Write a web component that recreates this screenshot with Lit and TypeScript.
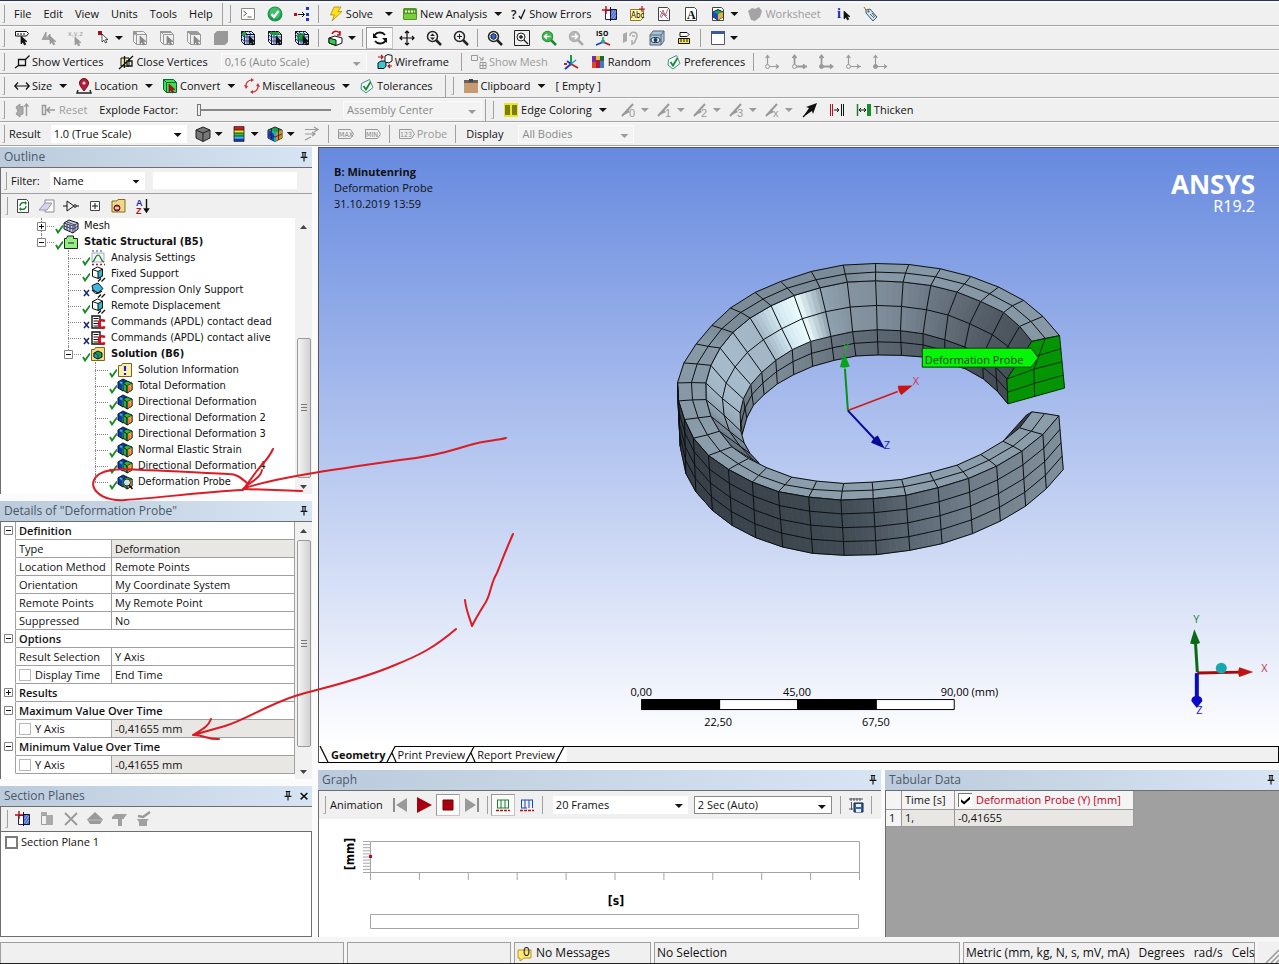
import { LitElement, html, svg, css, nothing } from "lit";
import { customElement } from "lit/decorators.js";

/* ---------- icons: 16 x 16 fragments ---------- */
const cursor = (x: number, y: number, c = "#111", f = c) =>
  svg`<path d="M${x} ${y}v8l2-1.8 1.4 2.8 1.4-.7-1.4-2.7h2.6z" fill=${f} stroke=${c} stroke-width=".7"/>`;
const page = svg`<path d="M2.5 1.5h9l2 2v11h-11z" fill="#fff" stroke="#444"/>`;
const wireCube = (c: string, fill: string) =>
  svg`<path d="M1.500 1.500h10l3 3v10h-10l-3-3z" fill=${fill} stroke=${c}/><path d="M1.500 1.500l3 3h10M4.500 4.500v10" fill="none" stroke=${c}/>`;
const meshCube = svg`${wireCube("#111", "#d4dcf6")}<path d="M1 4l3 3h10M1 8l3 3h10M7 5v10M10 5v10M4 1l3 3M8 1l3 3" fill="none" stroke="#33499c"/>`;
const rainbow = svg`<path d="M1 4l5-3 4 2v8l-4 2-5-3z" fill="#1636b8" stroke="#112"/><path d="M3 4l3 2v6" fill="none" stroke="#13c6d6" stroke-width="2"/><path d="M6 5l4-2 5 2v7l-5 3-4-3z" fill="#22b14c" stroke="#121"/><path d="M10 8l5-3v7l-5 3z" fill="#f0a63c" stroke="#121" stroke-width=".7"/><path d="M6 5l4 3v7" fill="none" stroke="#121"/><path d="M12 9v4" stroke="#e33" stroke-width=".8"/>`;
const mag = (c: string, inner: unknown = nothing) =>
  svg`<circle cx="6.500" cy="6.500" r="5" fill="none" stroke=${c} stroke-width="1.500"/><path d="M10 10l5 5" stroke=${c} stroke-width="2.500"/>${inner}`;
const axes = (f: number) =>
  svg`<path d="M4.500 13V2M2.500 4l2-2.500 2 2.500M${f % 2 ? 6 : 4} 12.500h11M13 10.500l2.500 2-2.500 2" fill="none" stroke="#9a9a9a" stroke-width=${f === 1 || f === 2 ? 1.8 : 1.2}/><circle cx="4.500" cy="12.500" r="2" fill=${f === 2 || f === 4 ? "#9a9a9a" : "#eee"} stroke="#9a9a9a"/>`;
const support = svg`<path d="M2.500 3.500l5-2.500 5 2v7l-4 2.500-6-2z" fill="#fff" stroke="#111"/><path d="M2.500 3.500l5.500 2" stroke="#111"/><path d="M8 5.500l4.500-2.500v7l-4.500 2.500z" fill="#2bb9c6" stroke="#111"/><path d="M8 15.500l3-3M11.500 15.500l3.500-3.500" stroke="#111" stroke-width="1.300"/>`;
const edge = (n: string) =>
  svg`<path d="M1 14L12 2" stroke="#999" stroke-width="2"/><path d="M3 13l3-6 3 3z" fill="#999"/><text x="8" y="15" font-size="11" fill="#999" font-family="Liberation Sans, sans-serif">${n}</text>`;
const check = svg`<path d="M2.500 5.500l8-4 3.500 8-7 5.500-5-4z" fill="#f2fbff" stroke="#4a8a8a"/><path d="M4.500 8l2.500 3.500L11.500 4" fill="none" stroke="#1c8a2c" stroke-width="1.800"/>`;
const section = svg`<path d="M3.500 4.500h5v9h-5z" fill="#fff" stroke="#225"/><path d="M8.500 3.500h6v10h-6z" fill="#4a6ad0" stroke="#113"/><path d="M9 12l5-7M11 13l3-4M9 8l3-4" stroke="#9cb2f0"/><path d="M0 4h8M4 0v8" stroke="#b01020" stroke-width="1.400"/><path d="M8.500 1v14" stroke="#113"/>`;

const I: Record<string, unknown> = {
  console: svg`<path d="M1.500 2.500h13v11h-13z" fill="#fff" stroke="#888"/><path d="M3.500 5l3 2.500-3 2.500M7.500 11h4" fill="none" stroke="#555"/>`,
  ok: svg`<circle cx="8" cy="8" r="7.500" fill="#1f9a4d"/><circle cx="8" cy="7" r="5.500" fill="#3fbf6c"/><path d="M4.500 8l2.500 3 4.500-6" fill="none" stroke="#fff" stroke-width="2.200"/>`,
  link: svg`<path d="M0 7h3v3H0z" fill="#b01020"/><path d="M4 8.500h6M8 6l2.500 2.500L8 11" fill="none" stroke="#111"/><path d="M12 1h3v3h-3zM12 7h3v3h-3zM12 12h3v3h-3z" fill="#1a38d8"/>`,
  bolt: svg`<path d="M6 1h7l-3 4.500h4L4 15l2.500-6H2.500z" fill="#ffe21a" stroke="#b48a00" stroke-width=".8"/>`,
  analysis: svg`<rect x="1" y="2" width="14" height="12" rx="1.500" fill="#4c9a1c"/><path d="M2 8h12v5H2z" fill="#7ccc3c"/><path d="M3 5.500h10" stroke="#fff" stroke-dasharray="2 1" stroke-width="2"/>`,
  errors: svg`<text x="0" y="12.500" font-size="12" font-weight="600" fill="#111" font-family="Open Sans, sans-serif">?</text><path d="M8 10l2 2.500L14 3.500" fill="none" stroke="#111" stroke-width="1.300"/>`,
  section,
  abc: svg`<path d="M1.500 3.500h13v8l-3 3h-10z" fill="#fdf7a8" stroke="#997a1a"/><text x="2" y="12" font-size="8" fill="#111" font-family="DejaVu Sans Condensed, sans-serif">Abc</text><path d="M10 3h6M13 0v6" stroke="#c01020" stroke-width="1.200"/>`,
  figure: svg`${page}<path d="M4 11l3-7 2 6 3-7M4 5l8 8" fill="none" stroke="#c66"/><path d="M5 12l3-5 3 3" fill="none" stroke="#77b"/>`,
  letter: svg`${page}<text x="4" y="12.500" font-size="12" font-weight="700" fill="#111" font-family="Liberation Serif, serif">A</text>`,
  picture: svg`${page}<path d="M3 6l5-2.500L13 6v5l-5 3-5-3z" fill="#1aa05a" stroke="#123"/><path d="M3 6l5 2v6l-5-3z" fill="#1b47c8"/><path d="M8 8l5-2v5l-5 3z" fill="#e8b22a"/>`,
  worksheet: svg`<path d="M1 5l4-3 3 1 4-2 3 4-2 6-5 4-4-1z" fill="#a4a4a4"/>`,
  info: svg`<text x="1" y="12" font-size="14" font-weight="700" fill="#1428c8" font-family="Liberation Serif, serif">i</text>${cursor(8, 5)}`,
  tag: svg`<path d="M3 4l4-1 7 8-4 4-7-8z" fill="#cfe6f5" stroke="#456"/><circle cx="5.500" cy="5.500" r="1" fill="#345"/><path d="M7 8l4 4M9 7l3 4" stroke="#345" stroke-width=".8"/><path d="M3 4L1 1" stroke="#a60"/>`,
  label: svg`<path d="M1.500 1.500h11l2 2-2 2.500h-11z" fill="#fff" stroke="#111"/><path d="M3 4h8" stroke="#111" stroke-dasharray="2 1"/>${cursor(7, 6)}`,
  pickGray: svg`<path d="M1 10l4-8v7l4-5v6" fill="#a5a5a5" stroke="#999"/>${cursor(9, 6, "#999")}`,
  xyz: svg`<text x="0" y="6" font-size="7" fill="#999" font-family="DejaVu Sans Condensed, sans-serif">x,y,z</text>${cursor(7, 7, "#999")}`,
  select: svg`<path d="M3 1h4v4H3z" fill="#a01020"/>${cursor(7, 4, "#111", "#fff")}`,
  vtx: svg`${wireCube("#999", "none")}<circle cx="3" cy="3" r="2" fill="#999"/>${cursor(8, 6, "#888")}`,
  edg: svg`${wireCube("#999", "none")}<path d="M1 2h11" stroke="#999" stroke-width="2"/>${cursor(8, 6, "#888")}`,
  fac: svg`${wireCube("#999", "none")}<path d="M1 1h10l3 3H4z" fill="#999"/>${cursor(8, 6, "#888")}`,
  bod: svg`<path d="M1 4l3-3h11v11l-3 3H1z" fill="#999"/>`,
  node: svg`${meshCube}<circle cx="4" cy="4" r="2" fill="#18a03a"/>${cursor(9, 6)}`,
  elemFace: svg`${meshCube}<path d="M2 2h9l3 3H5z" fill="#18a03a"/>${cursor(9, 6)}`,
  elem: svg`${meshCube}<path d="M4 4h6v6H4z" fill="#18a03a" stroke="#063"/>${cursor(9, 6)}`,
  extend: svg`<path d="M1 8l6-2 7 2v5l-6 2.500-7-2.500z" fill="#fff" stroke="#111"/><path d="M1 8l7 2v5.500L1 13z" fill="#2fce4c" stroke="#111"/><path d="M4 4c2-4 7-3 8 0M12 1v4H9" fill="none" stroke="#c01020" stroke-width="1.500"/>`,
  rotate: svg`<path d="M2 7c1-5 8-6 11-2M14 9c-1 5-8 6-11 2" fill="none" stroke="#111" stroke-width="1.800"/><path d="M1 3v5h5zM15 13V8h-5z" fill="#111"/>`,
  pan: svg`<path d="M8 1v14M1 8h14M6 3l2-2 2 2M6 13l2 2 2-2M3 6L1 8l2 2M13 6l2 2-2 2" fill="none" stroke="#111" stroke-width="1.200"/>`,
  zoom: mag("#222", svg`<path d="M4 6l2.500-2.500L9 6zM4 7.500L6.500 10 9 7.500z" fill="#222"/>`),
  zoomIn: mag("#222", svg`<path d="M4 6.500h5M6.500 4v5" stroke="#222"/>`),
  zoomBox: mag("#222", svg`<path d="M4 5l2.500-1.500L9 5v3L6.500 9.500 4 8z" fill="#3c62c4" stroke="#124"/>`),
  zoomFit: svg`<path d="M.5.5h15v15H.5z" fill="none" stroke="#222"/><circle cx="7" cy="7" r="4" fill="none" stroke="#222"/><path d="M10 10l4 4M5 7h4M7 5v4" stroke="#222" stroke-width="1.400"/>`,
  back: mag("#1c8a2c", svg`<circle cx="6.500" cy="6.500" r="5" fill="#3cb54a"/><path d="M9.500 6.500H4M6 4L3.500 6.500 6 9" fill="none" stroke="#fff" stroke-width="1.500"/>`),
  fwd: mag("#aaa", svg`<circle cx="6.500" cy="6.500" r="5" fill="#b5b5b5"/><path d="M3.500 6.500H9M7 4l2.500 2.500L7 9" fill="none" stroke="#fff" stroke-width="1.500"/>`),
  iso: svg`<text x="1" y="6" font-size="7" font-weight="700" fill="#111" font-family="DejaVu Sans Condensed, sans-serif">ISO</text><path d="M8 12V7" stroke="#18a03a" stroke-width="1.500"/><path d="M8 12l-7 3" stroke="#1a38d8" stroke-width="1.800"/><path d="M8 12l7 3" stroke="#c01020" stroke-width="1.800"/><circle cx="8" cy="11.500" r="2" fill="#1aa6a6"/>`,
  look: svg`<path d="M1 13V4l4-2v9z" fill="#aaa"/><path d="M8 6c0-5 7-5 7 0 0 3-2 3-2 6l-3 2v-4M10 6h3" fill="none" stroke="#aaa" stroke-width="1.500"/>`,
  eye: svg`<path d="M1 5l3-4h11v10l-3 4H1z" fill="#a9c3dd" stroke="#567"/><path d="M12 5h-11M12 5l3-4M12 5v10" stroke="#567" fill="none"/><ellipse cx="6.500" cy="10" rx="4.500" ry="2.500" fill="#fff" stroke="#123"/><circle cx="6.500" cy="10" r="2" fill="#123a6a"/>`,
  ruler: svg`<path d="M4 2.500h7l2 2-2 2H4z" fill="#fff" stroke="#111"/><path d="M2.500 8.500h11v5h-11z" fill="#ffe84a" stroke="#111"/><path d="M5 9v3M8 9v3M11 9v3" stroke="#111"/>`,
  windowIc: svg`<path d="M1.500 1.500h13v13h-13z" fill="#fff" stroke="#556"/><path d="M1 1h14v3H1z" fill="#3b5a9c"/>`,
  showV: svg`<path d="M4.500 5.500h7v6h-7zM11.500 5.500l4-4M1 14l3.500-2.500" fill="none" stroke="#111" stroke-width="1.300"/>`,
  closeV: svg`<path d="M3 4h8v8H3z" fill="#fdf29a" stroke="#111"/><path d="M6.500 2v12M1 15L15 2M9 7h5v5H9z" fill="none" stroke="#111" stroke-width="1.300"/>`,
  wire: svg`<path d="M1 9l3-2h5v5l-2 2.500H1z" fill="#39c6d2" stroke="#111"/><path d="M8 2l3-1.500 4 1V7l-3 2-4-1z" fill="#fff" stroke="#111"/><path d="M1 3h5M4 1l2 2-2 2M15 12h-4M13 10.500l-2 1.500 2 2" stroke="#b01020" fill="none" stroke-width="1.200"/>`,
  showMesh: svg`<path d="M.5 1.500h6v5h-6zM9 8.500h6v6H9zM12 8.500v6M9 11.500h6M8 3l4 3M12 3v3H9" fill="none" stroke="#999"/>`,
  triad: svg`<path d="M8 10V1" stroke="#18a03a" stroke-width="2"/><path d="M8 10l-6 5M8 10L4 7" stroke="#1a38d8" stroke-width="2"/><path d="M8 10l7 4M1 10h3" stroke="#c02020" stroke-width="2"/><path d="M8 10l5-4" stroke="#1aa0c0" stroke-width="1.500"/>`,
  random: svg`<path d="M2 2h4v6H2z" fill="#7a2ca0"/><path d="M6 2h4v4H6z" fill="#e8c12a"/><path d="M10 2h4v5h-4z" fill="#1b6a3a"/><path d="M2 8h4v6H2z" fill="#e0452a"/><path d="M6 6h4v8H6z" fill="#b01a3a"/><path d="M10 7h4v7h-4z" fill="#3a7ac8"/>`,
  check,
  ax0: axes(0), ax1: axes(1), ax2: axes(2), ax3: axes(3), ax4: axes(4),
  size: svg`<path d="M1 8h14M4 4.500L.8 8 4 11.500M12 4.500L15.200 8 12 11.500" fill="none" stroke="#111" stroke-width="1.200"/>`,
  pin: svg`<path d="M2 12l-1 3h14l-1-3" fill="none" stroke="#222" stroke-width="1.400"/><path d="M8 13C5 9 3.500 7.500 3.500 5a4.500 4.500 0 0 1 9 0C12.500 7.500 11 9 8 13z" fill="#b81c3c" stroke="#611"/><circle cx="8" cy="5" r="1.600" fill="#f5d5dc"/>`,
  convert: svg`${wireCube("#064", "#3fe04a")}${cursor(7, 6, "#a01020")}`,
  misc: svg`<path d="M2 9a6 6 0 0 1 5-7M14 7a6 6 0 0 1-5 7" fill="none" stroke="#c8303c" stroke-width="1.200"/><path d="M7 0v4L10 2zM9 12v4l-3-2zM0 7l4 1-2 3zM16 9l-4-1 2-3z" fill="#c8303c"/>`,
  clip: svg`<path d="M1 2h14v13H1z" fill="#c69a72"/><path d="M1 2h14v3H1z" fill="#6a6258"/><path d="M6 1h4v3H6z" fill="#444"/>`,
  explode: svg`<path d="M2 5l4-3v3l3-1v8l-3 1v2l-4-3 2-3z" fill="#aaa" stroke="#999"/><path d="M12.500 14V2M10.500 4.500l2-2.500 2 2.500" fill="none" stroke="#999" stroke-width="1.400"/>`,
  reset: svg`<path d="M1.500 3.500h3v9h-3zM6 8h8M9 5L6 8l3 3" fill="none" stroke="#999" stroke-width="1.500"/>`,
  edgeCol: svg`<path d="M1 1h14v14H1z" fill="#e9e62e"/><path d="M2 3h5v10H2zM9 3h5v10H9z" fill="#7d7c10"/>`,
  e0: edge("0"), e1: edge("1"), e2: edge("2"), e3: edge("3"), ex: edge("x"),
  bigArrow: svg`<path d="M1 15L9 7" stroke="#111" stroke-width="1.500"/><path d="M15 1L4 5l3 1-4 6 1 1 6-4 1 3z" fill="#111"/>`,
  gapIc: svg`<path d="M1.500 2v12M3.500 2v12" stroke="#b01020"/><path d="M5 8h5M8 6l2 2-2 2M12.500 2v12M14.500 2v12" fill="none" stroke="#111"/>`,
  thick: svg`<path d="M1.500 2v12" stroke="#18802a" stroke-width="1.500"/><path d="M11 2h4v12h-4z" fill="#18902a"/><path d="M3 8h7M5 6L3 8l2 2M8 6l2 2-2 2" fill="none" stroke="#111"/>`,
  grayCube: svg`<path d="M1 4l7-3 7 3v8l-7 3.500L1 12z" fill="#777" stroke="#222"/><path d="M1 4l7 3 7-3M8 7v8.500" fill="none" stroke="#222"/>`,
  legend: svg`<path d="M3 1h10v3H3z" fill="#d01818"/><path d="M3 4h10v3H3z" fill="#f0e020"/><path d="M3 7h10v3H3z" fill="#28c040"/><path d="M3 10h10v2.500H3z" fill="#20c8d8"/><path d="M3 12.500h10V15H3z" fill="#1830c0"/><path d="M3 .5h10v15H3zM3 4h10M3 7h10M3 10h10" fill="none" stroke="#222" stroke-width=".8"/>`,
  result: svg`<path d="M1 4l7-3 7 3v8l-7 3.500L1 12z" fill="#1e9e50" stroke="#222"/><path d="M1 4l7 3v8.500L1 12z" fill="#1840c0"/><path d="M8 7l7-3v8l-7 3.500z" fill="#d8882a"/><path d="M4.500 5.500L8 7v8.500" fill="none" stroke="#18b0c0" stroke-width="2"/><path d="M1 8l7 3 7-3M4.500 3v11M11.500 3v11" fill="none" stroke="#222" stroke-width=".8"/>`,
  vectors: svg`<path d="M1 3.500h12M10 1l4 2.500L10 6M1 8h9M8 6l3 2-3 2M1 14l6-3" fill="none" stroke="#999" stroke-width="1.200"/>`,
  max: svg`<path d="M.5 3.500h12l3 4.500-3 4.500H.5z" fill="none" stroke="#999"/><text x="1" y="11" font-size="7" fill="#888" font-family="DejaVu Sans Condensed, sans-serif">MAX</text>`,
  min: svg`<path d="M.5 3.500h12l3 4.500-3 4.500H.5z" fill="none" stroke="#999"/><text x="1" y="11" font-size="7" fill="#888" font-family="DejaVu Sans Condensed, sans-serif">MIN</text>`,
  probe: svg`<path d="M.5 3.500h12l3 4.500-3 4.500H.5z" fill="none" stroke="#999"/><text x="1" y="11" font-size="7" fill="#888" font-family="DejaVu Sans Condensed, sans-serif">123</text>`,
  refresh: svg`${page}<path d="M5 8c0-3 3-4 5-3M11 8c0 3-3 4-5 3" fill="none" stroke="#18802a" stroke-width="1.400"/><path d="M10 3v4l2-2zM6 13V9l-2 2z" fill="#18802a"/>`,
  eraser: svg`<path d="M6 2h9v12H6z" fill="#fff" stroke="#889"/><path d="M0 12l6-7h7l-5 7z" fill="#d8d4ea" stroke="#99a"/>`,
  expandSel: svg`<path d="M0 8h4M4 3v10l7-5zM13 8h3" fill="none" stroke="#111"/><circle cx="12" cy="8" r="1.300" fill="#fff" stroke="#111"/>`,
  plusBox: svg`<path d="M3.500 3.500h9v9h-9z" fill="#fff" stroke="#444"/><path d="M5 8h6M8 5v6" stroke="#111"/>`,
  folderStop: svg`<path d="M1 3h5l1-1.500h7V14H1z" fill="#ecd98a" stroke="#8a6a1a"/><circle cx="6" cy="10" r="3" fill="#c8404a" stroke="#511"/><path d="M4 10h4" stroke="#fff" stroke-width="1.400"/>`,
  sort: svg`<text x="1" y="7.500" font-size="9" font-weight="700" fill="#1428a8" font-family="Liberation Sans, sans-serif">A</text><text x="1" y="15.500" font-size="9" font-weight="700" fill="#b01020" font-family="Liberation Sans, sans-serif">Z</text><path d="M11.500 1v12M9.500 11l2 3 2-3z" stroke="#111" stroke-width="1.400" fill="#111"/>`,
  mesh: svg`<path d="M1 5l5-3 9 3v6l-5 4-9-4z" fill="#c8cdf0" stroke="#111"/><path d="M1 5l9 3 5-3M10 8v7M4 4l8 3M1 8l9 3 5-3M4 6v6M7 7v6M12 7v6" fill="none" stroke="#223" stroke-width=".8"/>`,
  folderG: svg`<path d="M1.500 4.500h2l1-2.500h6v2.500h4v10h-13z" fill="#93ee84" stroke="#222"/><path d="M5 9h6" stroke="#222"/>`,
  settings: svg`<path d="M2 3h12v9H2z" fill="#eef7ee" stroke="#aab"/><path d="M2 12c3 0 3-7 6-7s3 7 6 7" fill="none" stroke="#186a3a" stroke-width="1.200"/><path d="M2 1h12" stroke="#1a38d8" stroke-dasharray="2 2"/><path d="M2 14.500h13" stroke="#b01020" stroke-dasharray="2 2" stroke-width="1.500"/>`,
  support,
  compress: svg`<path d="M2 3.500l6-2.500 5 5.500-5 4.500-5-3z" fill="#3cb8e0" stroke="#113"/><path d="M2 8c3 5 7 4 10 1l-4 2z" fill="#fff" stroke="#111"/><path d="M8 15.500l3-3M11.500 15.500l3.500-3.500" stroke="#111" stroke-width="1.300"/>`,
  command: svg`<path d="M2 2h8v12H2z" fill="#fff" stroke="#111" stroke-width="1.400"/><path d="M3.500 4.500h5M3.500 7h5M3.500 9.500h5M3.500 12h5" stroke="#111"/><path d="M15 7c-5-2-6 0-6 3s2 5 6 3" fill="none" stroke="#d01020" stroke-width="2.600"/>`,
  solution: svg`<path d="M1.500 3.500h3l1-2h9v13h-13z" fill="#f1df88" stroke="#7a6420"/><path d="M4 7l4-2 4 2v4l-4 2-4-2z" fill="#1e9e50" stroke="#111"/><path d="M4 7l4 2v4l-4-2z" fill="#1aa0b0" stroke="#111" stroke-width=".6"/>`,
  infoFolder: svg`<path d="M1.500 3.500h3l1-2h9v13h-13z" fill="#fbf0b0" stroke="#7a6420"/><path d="M8 4v5M8 11v2" stroke="#1428c8" stroke-width="2.200"/>`,
  rainbow,
  probeTree: svg`${rainbow}<circle cx="10" cy="8.500" r="3.500" fill="#cfe0e6" stroke="#333"/><path d="M12 11l3.500 4" stroke="#111" stroke-width="1.600"/>`,
  first: svg`<path d="M2 1v14" stroke="#8f8f8f" stroke-width="2"/><path d="M15 1v14L4 8z" fill="#9a9a9a"/>`,
  play: svg`<path d="M1 0v16l15-8z" fill="#a80010"/>`,
  stop: svg`<path d="M3 3h10v10H3z" fill="#a80010" stroke="#700"/>`,
  last: svg`<path d="M14 1v14" stroke="#8f8f8f" stroke-width="2"/><path d="M1 1v14l11-7z" fill="#9a9a9a"/>`,
  grid1: svg`<path d="M2 3h12M2 11h12M2.500 3v8M6 3v8M10 3v8M13.500 3v8" fill="none" stroke="#18802a"/><path d="M1 13.500h14" stroke="#b01020" stroke-dasharray="3 1" stroke-width="1.500"/>`,
  grid2: svg`<path d="M2 3h12M2 11h6M2.500 3v8M6 3v8M10 3v8M13.500 3v8" fill="none" stroke="#1a48b8"/><path d="M1 13.500h14" stroke="#b01020" stroke-dasharray="3 1" stroke-width="1.500"/>`,
  save: svg`<path d="M1 2h14M3 1v3M6 1v3M9 1v3M12 1v3M3.500 5v8M1 12h4" stroke="#555" fill="none"/><path d="M6 6h9v9H6z" fill="#3464b8" stroke="#123"/><path d="M8 7h5v3H8zM8 12h5v3H8z" fill="#eef"/>`,
  secCopy: svg`<path d="M2.500 4.500h5v9h-5z" fill="none" stroke="#999"/><path d="M7 4h7v10H7zM2 1h6v3H2z" fill="#aaa"/>`,
  cross: svg`<path d="M2 2l12 12M14 2L2 14" stroke="#999" stroke-width="1.800"/>`,
  diamond: svg`<path d="M8 1l8 7.500-3 4.500H3L0 8.500z" fill="#999"/><path d="M1 9h14" stroke="#bbb"/>`,
  tee: svg`<path d="M1 6l3-3h12l-3 4v1h-2v7H7V8H1z" fill="#a0a0a0"/>`,
  teeEdit: svg`<path d="M2 8h12l-2 2v5H4v-4z" fill="#a0a0a0"/><path d="M3 5l5 1 7-5" stroke="#999" stroke-width="2.500" fill="none"/>`,
  pinIc: svg`<path d="M5 2h6M6.500 2v6M9.500 2v6M3.500 8.500h9M8 9v5" fill="none" stroke="#111" stroke-width="1.500"/>`,
  close: svg`<path d="M3.500 4l9 8.500M12.500 4l-9 8.500" stroke="#111" stroke-width="2"/>`,
};
const ic = (n: string) => html`<svg class="ic" viewBox="0 0 16 16" aria-hidden="true">${I[n]}</svg>`;

/* ---------- toolbar model ---------- */
type Item =
  | { k: "btn"; icon?: string; text?: string; drop?: boolean; off?: boolean; on?: boolean; cls?: string; name?: string }
  | { k: "sel"; text: string; cls: string; off?: boolean; name: string }
  | { k: "txt"; text: string; cls?: string }
  | { k: "range" } | { k: "sep" } | { k: "grip" } | { k: "end" };
const b = (icon: string, text = "", o: object = {}): Item => ({ k: "btn", icon, text, ...o });
const D = { drop: true }, OFF = { off: true };
const NEAR = { drop: true, cls: "near" };
const sep: Item = { k: "sep" }, grip: Item = { k: "grip" }, end: Item = { k: "end" };
const menu = (text: string): Item => ({ k: "btn", text, cls: "menu" });

const BARS: Item[][] = [
  [grip, ...["File", "Edit", "View", "Units", "Tools", "Help"].map(menu), end, grip, b("console"), b("ok"), b("link"), sep,
    b("bolt", "Solve", { drop: true, cls: "far" }), b("analysis", "New Analysis", D), b("errors", "Show Errors"),
    b("section"), b("abc"), b("figure"), b("letter"), b("picture", "", D), b("worksheet", "Worksheet", { off: true, cls: "wide" }), b("info"), b("tag")],
  [grip, b("label"), b("pickGray"), b("xyz"), b("select", "", D), b("vtx"), b("edg"), b("fac"), b("bod"), b("node"), b("elemFace"), b("elem"), sep,
    b("extend", "", D), sep, b("rotate", "", { on: true }), b("pan"), b("zoom"), b("zoomIn"), sep, b("zoomBox"), b("zoomFit"), b("back"), b("fwd"), b("iso"), b("look"), b("eye"), b("ruler"), sep, b("windowIc", "", D)],
  [grip, b("showV", "Show Vertices", { cls: "wide" }), b("closeV", "Close Vertices", { cls: "wide" }), { k: "sel", text: "0,16 (Auto Scale)", cls: "s146", off: true, name: "Vertex scale" },
    b("wire", "Wireframe", { cls: "wide" }), sep, b("showMesh", "Show Mesh", { off: true, cls: "wide" }), b("triad"), b("random", "Random", { cls: "wide" }), b("check", "Preferences"), sep, b("ax0"), b("ax1"), b("ax2"), b("ax3"), b("ax4")],
  [grip, b("size", "Size", D), b("pin", "Location", D), b("convert", "Convert", D), b("misc", "Miscellaneous", D), b("check", "Tolerances", { cls: "wide" }), end, grip, b("clip", "Clipboard", D), { k: "txt", text: "[ Empty ]" }],
  [grip, b("explode", "", OFF), b("reset", "Reset", OFF), { k: "txt", text: "Explode Factor:", cls: "explode" }, { k: "range" }, { k: "sel", text: "Assembly Center", cls: "s139", off: true, name: "Assembly center" }, end, grip,
    b("edgeCol", "Edge Coloring", { drop: true, cls: "wide" }), ...["e0", "e1", "e2", "e3", "ex"].map((e) => b(e, "", { drop: true, off: true, cls: "near" })), b("bigArrow"), b("gapIc"), b("thick", "Thicken")],
  [grip, { k: "txt", text: "Result", cls: "result" }, { k: "sel", text: "1.0 (True Scale)", cls: "s136", name: "Result scale" }, b("grayCube", "", NEAR), b("legend", "", NEAR), b("result", "", NEAR),
    b("vectors", "", OFF), sep, b("max", "", OFF), b("min", "", OFF), sep, b("probe", "Probe", OFF), sep, { k: "txt", text: "Display" }, { k: "sel", text: "All Bodies", cls: "s116 gap", off: true, name: "Display bodies" }],
];

const selectBox = (text: string, cls: string, off: boolean, name: string) => html`
  <span class="sel ${cls} ${off ? "off" : ""}"><select aria-label=${name} ?disabled=${off}><option>${text}</option></select></span>`;

const item = (i: Item) => {
  switch (i.k) {
    case "sep": return html`<i class="sep"></i>`;
    case "grip": return html`<i class="grip"></i>`;
    case "end": return html`<i class="end"></i>`;
    case "txt": return html`<span class="txt ${i.cls ?? ""}">${i.text}</span>`;
    case "range": return html`<input class="range" type="range" min="0" max="100" value="0" aria-label="Explode Factor">`;
    case "sel": return selectBox(i.text, i.cls, !!i.off, i.name);
    case "btn": return html`<button class="btn ${i.drop ? "drop" : ""} ${i.off ? "off" : ""} ${i.on ? "on" : ""} ${i.cls ?? ""}"
      aria-label=${i.text || i.icon || ""}>${i.icon ? ic(i.icon) : nothing}${i.text ? html`<span>${i.text}</span>` : nothing}${i.drop ? html`<i class="arr"></i>` : nothing}</button>`;
  }
};

/* ---------- outline tree ---------- */
interface Node { t: string; i: string; x?: boolean; bold?: boolean; open?: boolean; kids?: Node[] }
const TREE: Node[] = [
  { t: "Mesh", i: "mesh", open: false },
  { t: "Static Structural (B5)", i: "folderG", bold: true, open: true, kids: [
    { t: "Analysis Settings", i: "settings" },
    { t: "Fixed Support", i: "support" },
    { t: "Compression Only Support", i: "compress", x: true },
    { t: "Remote Displacement", i: "support" },
    { t: "Commands (APDL) contact dead", i: "command", x: true },
    { t: "Commands (APDL) contact alive", i: "command", x: true },
    { t: "Solution (B6)", i: "solution", bold: true, open: true, kids: [
      { t: "Solution Information", i: "infoFolder" },
      { t: "Total Deformation", i: "rainbow" },
      { t: "Directional Deformation", i: "rainbow" },
      { t: "Directional Deformation 2", i: "rainbow" },
      { t: "Directional Deformation 3", i: "rainbow" },
      { t: "Normal Elastic Strain", i: "rainbow" },
      { t: "Directional Deformation 4", i: "rainbow" },
      { t: "Deformation Probe", i: "probeTree" }] }] }];

const expander = (open: boolean) => html`<svg class="exp" viewBox="0 0 9 9" aria-hidden="true"><path d="M.5.5h8v8h-8z" fill="#fff" stroke="#848484"/><path d=${open ? "M2 4.500h5" : "M2 4.500h5M4.500 2v5"} stroke="#111"/></svg>`;
const treeList = (nodes: Node[]): unknown => html`<ul>${nodes.map((n, k) => html`
  <li><div class="node ${n.bold ? "bold" : ""}">
    <span class="branch ${k === nodes.length - 1 ? "last" : ""}">${n.open === undefined ? nothing : expander(n.open)}</span>
    <svg class="tick" viewBox="0 0 9 16" aria-hidden="true">${n.x ? svg`<path d="M3 8l5 6M8 8l-5 6" stroke="#14287a" stroke-width="1.500"/>` : svg`<path d="M2 11l2 3.500L9 7.500" fill="none" stroke="#128a22" stroke-width="1.800"/>`}</svg>
    ${ic(n.i)}<span class="name">${n.t}</span></div>${n.kids ? treeList(n.kids) : nothing}</li>`)}</ul>`;

/* ---------- details rows ---------- */
type Row = { h: string; open?: boolean } | { l: string; v: string; ro?: boolean; cb?: boolean };
const DETAILS: Row[] = [
  { h: "Definition", open: true }, { l: "Type", v: "Deformation", ro: true }, { l: "Location Method", v: "Remote Points" },
  { l: "Orientation", v: "My Coordinate System" }, { l: "Remote Points", v: "My Remote Point" }, { l: "Suppressed", v: "No" },
  { h: "Options", open: true }, { l: "Result Selection", v: "Y Axis" }, { l: "Display Time", v: "End Time", cb: true },
  { h: "Results" }, { h: "Maximum Value Over Time", open: true }, { l: "Y Axis", v: "-0,41655 mm", ro: true, cb: true },
  { h: "Minimum Value Over Time", open: true }, { l: "Y Axis", v: "-0,41655 mm", ro: true, cb: true }];

/* ---------- meshed ring geometry ---------- */
type P = [number, number];
const left = (a: number[][]): P[] => a.map(([x, y]) => [670 + x / 3, 250 + y / 3]);
const right = (a: number[][]): P[] => a.map(([x, y]) => [870 + x / 3, 250 + y / 3]);
const A: P[] = [...right([[570,258],[520,200],[462,152],[387,112],[303,80],[212,57],[117,44],[17,41]]),
  ...left([[520,46],[424,65],[332,95],[255,128],[181,175],[125,227],[78,283],[41,340],[22,400],[25,454],[43,510],[70,566],[115,618],[175,660],[247,698],[325,727],[416,743],[513,752],[610,748]]),
  ...right([[108,738],[205,715],[297,687],[381,650],[457,605],[520,555],[568,499]])];
const M: P[] = [...right([[527,266],[484,215],[428,168],[360,132],[284,103],[197,81],[107,70],[17,67]]),
  ...left([[526,73],[438,90],[352,115],[279,148],[212,188],[155,237],[114,290],[81,343],[64,399],[67,451],[84,505],[112,556],[150,605],[205,643],[266,678],[345,706],[428,720],[517,725],[609,722]]),
  ...right([[102,712],[192,693],[280,667],[358,632],[430,590],[485,545],[525,492]])];
const B: P[] = [...right([[487,275],[450,230],[402,188],[333,155],[262,127],[183,107],[100,97],[17,93]]),
  ...left([[532,97],[450,114],[372,137],[303,168],[240,205],[188,248],[150,295],[122,347],[107,400],[108,450],[122,500],[148,545],[185,592],[235,627],[290,655],[365,683],[440,695],[521,702],[607,698]]),
  ...right([[95,690],[180,670],[262,647],[333,615],[400,575],[450,535],[487,487]])];
const C: P[] = [...right([[450,330],[415,290],[368,255],[300,222],[235,196],[170,180],[95,170],[20,167]]),
  ...left([[541,172],[467,186],[397,207],[335,237],[280,270],[232,308],[195,352],[168,400],[157,447],[162,497],[178,545],[210,590],[250,632]])];
const Dn: P[] = [...right([[412,388],[378,352],[338,320],[285,292],[225,270],[160,252],[92,243],[22,240]]),
  ...left([[548,246],[483,260],[422,275],[367,300],[317,332],[275,368],[242,405],[220,448],[210,490],[212,545],[222,580],[240,612],[268,642]])];
const F: P[] = [...right([[415,463],[383,425],[341,388],[288,358],[225,338],[160,322],[95,317],[25,316]]),
  ...left([[558,319],[492,332],[428,350],[371,375],[322,403],[282,435],[250,467],[230,505],[216,555]])];
const O: P[] = [...left([[24,470],[30,590],[47,672],[77,727],[127,783],[186,828],[257,865],[338,893],[428,912],[523,918],[620,916]]),
  ...right([[120,903],[217,883],[308,853],[392,815],[468,770],[530,718],[581,660]])];
const mix = (p: P, q: P, t: number): P => [p[0] + (q[0] - p[0]) * t, p[1] + (q[1] - p[1]) * t];
const between = (p: P[], q: P[], t: number) => q.map((_, i) => mix(p[i], q[i], t));
const rgb = (h: string) => [1, 3, 5].map((i) => parseInt(h.slice(i, i + 2), 16));
const blend = (a: string, c: string, t: number) => `rgb(${rgb(a).map((v, i) => Math.round(v + (rgb(c)[i] - v) * t)).join()})`;
const pts = (a: P[]) => a.map((p) => p.map((v) => v.toFixed(1)).join()).join(" ");
const STRIPS = 5;
const band = (p: P[], q: P[], colors: string[], rows: P[][]) => {
  const out: unknown[] = [];
  const n = Math.min(p.length, q.length);
  for (let i = 0; i < n - 1; i++)
    for (let s = 0; s < STRIPS; s++) {
      const c = blend(colors[i], colors[i + 1], (s + 0.5) / STRIPS), u = s / STRIPS, v = (s + 1) / STRIPS;
      const mid = rows[Math.floor(rows.length / 2)];
      out.push(svg`<polygon points=${pts([mix(p[i], p[i + 1], u), mix(p[i], p[i + 1], v), mix(mid[i], mid[i + 1], v), mix(q[i], q[i + 1], v), mix(q[i], q[i + 1], u), mix(mid[i], mid[i + 1], u)])} fill=${c} stroke=${c} stroke-width=".8"/>`);
    }
  for (let i = 0; i < n; i++) out.push(svg`<polyline class="wire" points=${pts([p[i], ...rows.slice(1, -1).map((r) => r[i]), q[i]])}/>`);
  for (const r of rows) out.push(svg`<polyline class="wire" points=${pts(r.slice(0, n))}/>`);
  return out;
};
const coneC = ["#464f58","#4a535c","#4f5862","#58626c","#626d78","#6c7884","#788693","#7f8e9b","#84939f","#8fa1ae","#edfdff","#cfe6ef","#a3b6c5","#a4b8c8","#a6bbcb","#a6bbca","#a2b6c5","#93a5b3","#7d8d9a","#6c7a86","#5f6c77"];
const lowC = ["#414a52","#434c54","#454e57","#48525b","#4c5660","#505b65","#56616b","#5c6771","#606c77","#68747f","#707d88","#788692","#7c8a96","#7c8a96","#75838f","#6a7782","#606c77"];
const topC = A.map((_, i) => (i < 8 ? "#8697a5" : i < 14 ? "#7b8b98" : i < 19 ? "#8798a6" : "#8b9caa"));
const wallC = ["#343d44","#343d44","#353e45","#363f46","#38414a","#3a434b","#3b444c","#3d464e","#3e484f","#414b54","#4a555f","#5a6670","#667380","#6f7c88","#74828e","#798794","#7c8b98","#7f8e9b"];
const OA = A.slice(16);
const ring = [
  ...band(Dn, F, lowC, [Dn, between(Dn, F, 0.48), F]),
  ...band(B, Dn, coneC, [B, C, Dn]),
  svg`<polygon points=${pts([B[33], [1026.600, 415.700], B[31], B[32]])} fill="#353d44" stroke="#111"/>`,
  ...band(A, B, topC, [A, M, B]),
  ...band(OA, O, wallC, [OA, between(OA, O, 0.25), between(OA, O, 0.5), between(OA, O, 0.75), O]),
];

const arrowHead = (x: number, y: number, deg: number, c: string) => svg`<path transform="translate(${x} ${y}) rotate(${deg})" d="M0 0l-14-5q-2 5 0 10z" fill=${c}/>`;
const scene = html`
<svg class="scene" viewBox="319 148 960 599" role="img" aria-label="Meshed split ring with deformation probe">
  <g>${ring}</g>
  <polygon points="1032.300,341.700 1060,336 1065,388.500 1008.300,404.300 1007.300,379.300" fill="#049404" stroke="#012f01"/>
  <path d="M1045.600 338.700l-11.300 31.300 .7 27M1061.600 349l-22.600 6.700-12 4M1062.300 362.300l-27.300 7-27.500 10M1063.300 375.700l-28.300 8-27.300 9" fill="none" stroke="#012f01"/>
  <path d="M922.500 348.500h109l7 9.500-7 9.500h-109z" fill="#06f506" stroke="#063f06"/>
  <text x="925" y="364" class="t" fill="#0b3d0b">Deformation Probe</text>
  <path d="M848 411l-3-42" stroke="#0b8f1c" stroke-width="2"/>${arrowHead(844, 353, -94, "#0aa31c")}
  <path d="M848 411l50-19" stroke="#d01a1a" stroke-width="1.600"/>${arrowHead(913, 386, -20, "#c81414")}
  <path d="M848 411l29 31" stroke="#0a0a9a" stroke-width="2"/>${arrowHead(885, 449, 42, "#0a0a9a")}
  <text x="843" y="351" class="t" fill="#1bb82a">Y</text><text x="913" y="385" class="t" fill="#d03048">X</text><text x="884" y="450" class="t" fill="#1a1ab8">Z</text>
  <path d="M641.500 700.500h313v10h-313z" fill="#fff" stroke="#000"/><path d="M641 700h79v11h-79zM797 700h80v11h-80z" fill="#000"/>
  <g class="t" text-anchor="middle"><text x="641" y="697">0,00</text><text x="797" y="697">45,00</text><text x="718" y="727">22,50</text><text x="876" y="727">67,50</text></g>
  <text x="941" y="697" class="t">90,00 (mm)</text>
  <path d="M1198 673l-2-32" stroke="#0b6a14" stroke-width="3"/>${arrowHead(1195, 630, -93, "#0b6a14")}
  <path d="M1198 674l44-1" stroke="#a80a0a" stroke-width="3"/>${arrowHead(1254, 673, 0, "#c01414")}
  <circle cx="1222" cy="669" r="5.500" fill="#18a8b0"/>
  <path d="M1197.500 674v26" stroke="#0a0ac0" stroke-width="4"/><path d="M1197.500 709l-5.500-7q0-5 5.500-5t5.500 5z" fill="#0a0ac8"/>
  <text x="1194" y="624" class="t" fill="#1b8a3a">Y</text><text x="1262" y="673" class="t" fill="#d03048">X</text><text x="1197" y="715" class="t" fill="#1a1ab8">Z</text>
</svg>`;

const slant = (d: string) => html`<svg class="slant" viewBox="0 0 12 16" aria-hidden="true"><path d=${d} fill="none" stroke="#000" stroke-width="1.200"/></svg>`;

const title = (t: string, close = false) => html`<header class="title"><h2>${t}</h2><button class="tb" aria-label="Pin ${t}">${ic("pinIc")}</button>${close ? html`<button class="tb" aria-label="Close ${t}">${ic("close")}</button>` : nothing}</header>`;
const scroll = (cls: string) => html`<div class="scroll ${cls}"><i class="up"></i><i class="thumb"></i><i class="down"></i></div>`;

@customElement("app-root")
export class AppRoot extends LitElement {
  static styles = css`
    :host { display: flex; flex-direction: column; position: relative; box-sizing: border-box; height: 100vh; min-height: 700px; overflow: hidden;
      background: #f4f4f4; border-top: 1px solid #2c3650; border-bottom: 1px solid #222; color: #111; font: 11px/16px "Open Sans", "Noto Sans", sans-serif; }
    *, *::before, *::after { box-sizing: border-box; }
    button, select, input { font: inherit; color: inherit; margin: 0; }
    button { background: none; border: 0; padding: 0; }
    h2, ul { margin: 0; padding: 0; }
    i { display: block; flex: none; }
    nav { padding-top: 1px; flex: none; }
    .ic { width: 16px; height: 16px; flex: none; display: block; overflow: visible; }
    .bar { display: flex; align-items: center; height: 24px; flex: none; background: #f0f0f0; border-bottom: 1px solid #a3a3a3; border-top: 1px solid #fbfbfb; white-space: nowrap; }
    .grip { width: 3px; height: 18px; margin: 0 3px 0 2px; border-right: 1px solid #a0a0a0; border-bottom: 1px solid #c0c0c0; }
    .sep { width: 1px; height: 18px; margin: 0 3px; background: #a0a0a0; }
    .end { width: 4px; height: 22px; margin-left: 3px; border-left: 1px solid #a0a0a0; }
    .btn { display: flex; align-items: center; gap: 2px; height: 22px; padding: 0 5px 0 6px; flex: none; }
    .btn.menu { padding: 0 6px; }
    .btn.on, .tool .on { background: #fafafa; border: 1px solid #c4c4c4; border-top-color: #999; border-left-color: #999; padding: 0 4px 0 5px; }
    .btn.off { color: #9b9b9b; }
    .btn.drop { padding-right: 3px; }
    .btn.near { padding-left: 5px; }
    .btn.wide { padding-right: 9px; }
    .arr { width: 8px; height: 4px; background: #111; clip-path: polygon(0 0, 100% 0, 50% 100%); margin-left: 2px; }
    .btn span + .arr { margin-left: 5px; }
    .btn.far span + .arr { margin-left: 10px; }
    .off .arr { background: #9b9b9b; }
    .txt { padding: 0 7px; }
    .txt.result { padding: 0 10px 0 1px; }
    .sel { position: relative; display: block; flex: none; height: 18px; background: #fff; }
    .sel::after { content: ""; position: absolute; right: 5px; top: 8px; width: 8px; height: 4px; background: #111; clip-path: polygon(0 0, 100% 0, 50% 100%); pointer-events: none; }
    .sel.off { background: #f3f3f3; border: 1px solid #fbfbfb; color: #8a8a8a; }
    .sel.off::after { background: #9b9b9b; }
    .sel select { appearance: none; display: block; width: 100%; height: 100%; border: 0; border-radius: 0; background: none; padding: 0 3px; opacity: 1; outline: 0; }
    .s146 { width: 146px; margin: 0 4px; } .s139 { width: 139px; margin-left: 12px; } .s136 { width: 136px; margin-right: 3px; } .s116 { width: 116px; }
    .gap { margin-left: 8px; }
    .range { appearance: none; width: 134px; height: 14px; background: linear-gradient(#888, #888) center / 100% 2px no-repeat; margin-left: 12px; }
    .range::-webkit-slider-thumb { appearance: none; width: 4px; height: 12px; background: #eee; border: 1px solid #777; }

    .main { flex: 1; min-height: 0; display: grid; grid-template-columns: 312px minmax(0, 1fr); gap: 6px; padding: 1px 0 0; background: #fbfbfb; }
    .leftcol { display: grid; grid-template-columns: minmax(0, 1fr); grid-template-rows: minmax(0, 347fr) minmax(0, 278fr) minmax(0, 151fr); gap: 7px; min-height: 0; }
    .rightcol { display: grid; grid-template-columns: minmax(0, 1fr); grid-template-rows: minmax(0, 616fr) minmax(0, 167fr); gap: 7px; min-height: 0; }
    .bottom { display: grid; grid-template-columns: minmax(0, 563fr) minmax(0, 394fr); gap: 4px; min-height: 0; }
    .panel { display: flex; flex-direction: column; min-height: 0; }
    .title { display: flex; align-items: center; height: 20px; flex: none; padding: 0 0 0 4px; background: linear-gradient(90deg, #bccbdb, #d6e4f3); color: #49586b; }
    .title h2 { flex: 1; font-size: 12px; font-weight: 400; }
    .tb { width: 16px; height: 16px; display: grid; place-items: center; }
    .tb .ic { width: 12px; height: 12px; }
    .body { flex: 1; min-height: 0; border: solid #6e6e6e; border-width: 1px 0 0 1px; background: #fff; display: flex; flex-direction: column; }
    .filter { display: flex; align-items: center; height: 26px; background: #f0f0f0; border-bottom: 1px solid #a0a0a0; padding-left: 1px; flex: none; }
    .filter label { width: 40px; padding-left: 1px; }
    .filter .sel { width: 95px; }
    .filter .q { flex: 1; min-width: 0; height: 17px; border: 0; background: #fff; margin: 0 15px 0 8px; }
    .tool { display: flex; align-items: center; height: 24px; background: #f0f0f0; padding-left: 2px; flex: none; }
    .tool.anima { height: 28px; }
    .split { flex: 1; min-height: 0; display: flex; overflow: hidden; }
    .tree { flex: 1; min-width: 0; overflow: hidden; padding-left: 36px; font-family: "DejaVu Sans Condensed", "DejaVu Sans", sans-serif; }
    .tree ul { list-style: none; }
    .tree ul ul { padding-left: 27px; }
    .node { display: flex; height: 16px; align-items: center; white-space: nowrap; }
    .bold { font-weight: 700; }
    .name { padding-left: 5px; }
    .branch { position: relative; width: 17px; height: 16px; flex: none; display: flex; align-items: center; }
    .branch::before { content: ""; position: absolute; left: 4px; top: 0; height: 100%; border-left: 1px dotted #8a8a8a; }
    .branch.last::before { height: 8px; }
    .branch::after { content: ""; position: absolute; left: 4px; right: 0; top: 8px; border-top: 1px dotted #8a8a8a; }
    .exp { width: 9px; height: 9px; display: block; position: relative; z-index: 1; }
    .tick { width: 9px; height: 16px; flex: none; }
    .scroll { width: 17px; flex: none; background: #f1f1f1; display: flex; flex-direction: column; align-items: center; }
    .up, .down { width: 7px; height: 4px; margin: 7px 0; background: #444; clip-path: polygon(50% 0, 100% 100%, 0 100%); }
    .down { clip-path: polygon(0 0, 100% 0, 50% 100%); margin: 7px 0 5px; }
    .thumb { width: 14px; flex: 206 0 0; border: 1px solid #9a9a9a; border-radius: 2px; background: repeating-linear-gradient(#777 0 1px, transparent 1px 3px) center / 6px 8px no-repeat, linear-gradient(90deg, #f4f4f4, #d2d2d2); }
    .scroll.low::before { content: ""; flex: 105 0 0; }
    .scroll.low .thumb { flex: 143 0 0; }
    .scroll.low .up { order: -1; }
    .scroll.high .down { margin-top: 23px; }

    .grid { flex: 1; min-width: 0; overflow: hidden; }
    table { border-collapse: separate; border-spacing: 0; }
    .props { width: 100%; table-layout: fixed; }
    .props td, .props th { height: 18px; padding: 0 3px; border: solid #a0a0a0; border-width: 0 1px 1px 0; text-align: left; font-weight: 400; white-space: nowrap; line-height: 15px; }
    .props .g { width: 15px; padding: 0 0 0 3px; border-bottom-color: #fff; }
    .props .l { width: 96px; }
    .props .h { font-weight: 600; }
    .props .ro { background: #e9e7e4; }
    .props label { display: flex; align-items: center; gap: 4px; }
    input[type="checkbox"] { appearance: none; width: 12px; height: 12px; border: 1px solid #b8b8b8; background: #fff; flex: none; }
    .list { flex: 1; border: solid #6e6e6e; border-width: 1px 1px 1px 0; padding: 2px 4px; }
    .list label { display: flex; align-items: center; gap: 3px; }
    .list input[type="checkbox"] { width: 13px; height: 13px; border: 2px solid #7c7c7c; }

    .view { border: solid #555; border-width: 1px 0 0 1px; display: flex; flex-direction: column; }
    .canvas { flex: 1; min-height: 0; position: relative; background: linear-gradient(#678adf, #fff); }
    .scene { position: absolute; inset: 0; width: 100%; height: 100%; }
    .wire { fill: none; stroke: #0c0f12; stroke-width: 1; }
    .t { font: 11px "Open Sans", sans-serif; }
    .over { position: relative; display: flex; justify-content: space-between; padding: 16px 24px 0 15px; }
    .case b { display: block; font-weight: 700; }
    .case span { display: block; }
    .brand { color: #fff; text-align: right; padding-top: 6px; }
    .brand b { display: block; font: 700 26px/28px "Noto Sans", "Open Sans", sans-serif; }
    .brand span { display: block; font: 16px/17px "Noto Sans", "Open Sans", sans-serif; }
    .tabs { display: flex; height: 17px; flex: none; background: #f0f0f0; border-bottom: 1px solid #000; border-right: 1px solid #000; }
    .tabs button { height: 16px; line-height: 16px; background: #fff; border-top: 1px solid #000; }
    .tabs .cur { font-weight: 700; border-top-color: #fff; }
    .slant { width: 12px; height: 16px; background: #fff; flex: none; }
    .fill { flex: 1; border-top: 1px solid #000; }
    .tool .btn { padding: 0 4px; }
    .tool .btn.on { padding: 0 3px; }
    .anim { padding: 0 5px 0 1px; }
    .tool .s135 { width: 135px; margin-left: 7px; }
    .tool .s138 { width: 138px; margin-left: 6px; border: 1px solid #8a8a8a; margin-right: 5px; }
    .chart { flex: 1; min-height: 0; width: 100%; display: block; }
    .data { background: #a0a0a0; align-items: flex-start; }
    .data th, .data td { height: 17px; padding: 0 3px; text-align: left; font-weight: 400; white-space: nowrap; line-height: 16px; background: #f4f4f4; border: solid #999; border-width: 0 1px 1px 0; }
    .data th { height: 19px; }
    .data td { background: #e9e7e4; }
    .data .n { width: 16px; padding: 0 3px; background: #f4f4f4; }
    .data .tm { width: 53px; }
    .data .pr { width: 179px; }
    .data label { display: flex; align-items: center; gap: 4px; color: #c00020; }
    .data input[type="checkbox"] { width: 14px; height: 14px; border: solid #777; border-width: 1px 0 0 1px; background: #fff; display: grid; place-items: center; }
    .data input:checked::before { content: ""; width: 9px; height: 8px; background: #000; clip-path: polygon(0 35%, 35% 65%, 100% 0, 100% 35%, 35% 100%, 0 70%); }

    .status { display: grid; grid-template-columns: minmax(0, 344fr) minmax(0, 164fr) minmax(0, 137fr) minmax(0, 306fr) minmax(0, 292fr) 21px; gap: 3px; height: 26px; padding-top: 5px; flex: none; background: #f6f6f6; font-size: 12px; }
    .status > div { display: flex; align-items: center; border: solid #a0a0a0; border-width: 1px 1px 0 1px; background: #f0f0f0; padding-left: 2px; white-space: nowrap; gap: 9px; }
    .status .msg { gap: 3px; }
    .status .size { border: 0; justify-content: flex-end; align-items: flex-end; overflow: hidden; }
    .ink { position: absolute; inset: 0; width: 100%; height: 100%; pointer-events: none; z-index: 5; }
    .ink path { fill: none; stroke: #dc1c24; stroke-width: 2; stroke-linecap: round; stroke-linejoin: round; }
  `;

  render() {
    return html`
      <nav>${BARS.map((bar) => html`<div class="bar">${bar.map(item)}</div>`)}</nav>
      <div class="main">
        <div class="leftcol">
          <section class="panel">${title("Outline")}
            <div class="body">
              <div class="filter"><i class="grip"></i><label for="flt">Filter:</label>
                <span class="sel"><select id="flt"><option>Name</option></select></span>
                <input class="q" type="text" aria-label="Filter text"></div>
              <div class="tool outline"><i class="grip"></i>${["refresh", "eraser", "expandSel", "plusBox", "folderStop", "sort"].map((n) => item(b(n)))}</div>
              <div class="split"><div class="tree">${treeList(TREE)}</div>${scroll("low")}</div>
            </div></section>
          <section class="panel">${title('Details of "Deformation Probe"')}
            <div class="body"><div class="split"><div class="grid"><table class="props">
              <colgroup><col class="g"><col class="l"><col></colgroup>
              ${DETAILS.map((r) => "h" in r
                ? html`<tr><td class="g">${expander(!!r.open)}</td><th class="h" colspan="2">${r.h}</th></tr>`
                : html`<tr><td class="g"></td><td class="l">${r.cb ? html`<label><input type="checkbox">${r.l}</label>` : r.l}</td><td class=${r.ro ? "ro" : ""}>${r.v}</td></tr>`)}
            </table></div>${scroll("high")}</div></div></section>
          <section class="panel">${title("Section Planes", true)}
            <div class="body">
              <div class="tool"><i class="grip"></i>${["section", "secCopy", "cross", "diamond", "tee", "teeEdit"].map((n) => item(b(n)))}</div>
              <div class="list"><label><input type="checkbox">Section Plane 1</label></div>
            </div></section>
        </div>
        <div class="rightcol">
          <section class="view">
            <div class="canvas">${scene}
              <div class="over"><div class="case"><b>B: Minutenring</b><span>Deformation Probe</span><span>31.10.2019 13:59</span></div>
                <div class="brand"><b>ANSYS</b><span>R19.2</span></div></div>
            </div>
            <div class="tabs">${slant("M1 0l8 16")}<button class="cur">Geometry</button>${slant("M1 16L9 .5h3M6 7l4 9")}<button>Print Preview</button>${slant("M0 .5h12M1 16L9 .5M6 7l4 9")}<button>Report Preview</button>${slant("M0 .5h12M1 16L9 .5")}<i class="fill"></i></div>
          </section>
          <div class="bottom">
            <section class="panel">${title("Graph")}
              <div class="body">
                <div class="tool anima"><i class="grip"></i><span class="anim">Animation</span>${item(b("first"))}${item(b("play"))}${item(b("stop", "", { on: true }))}${item(b("last"))}${item(sep)}
                  ${item(b("grid1", "", { on: true }))}${item(b("grid2"))}${item(sep)}${selectBox("20 Frames", "s135", false, "Frames")}${selectBox("2 Sec (Auto)", "s138", false, "Duration")}${item(sep)}${item(b("save"))}${item(sep)}</div>
                <svg class="chart" viewBox="319 819 562 118" role="img" aria-label="Deformation over time">
                  <path d="M370.500 841.500h489v31h-489z" fill="#fff" stroke="#a5a5a5"/>
                  <path d=${Array.from({ length: 11 }, (_, k) => `M${370.500 + k * 48.900} 872v8`).join("") + Array.from({ length: 11 }, (_, k) => `M363 ${841.500 + k * 3.100}h7`).join("")} stroke="#a5a5a5"/>
                  <path d="M369 855h3v3h-3z" fill="#b01020"/>
                  <path d="M370.500 914.500h488v14h-488z" fill="#fff" stroke="#a5a5a5"/>
                  <g font-family="DejaVu Sans Condensed, sans-serif" font-size="12" font-weight="700" text-anchor="middle"><text transform="translate(354 854) rotate(-90)">[mm]</text><text x="616" y="905">[s]</text></g>
                </svg>
              </div></section>
            <section class="panel">${title("Tabular Data")}
              <div class="body data"><table>
                <tr><th class="n"></th><th class="tm">Time [s]</th><th class="pr"><label><input type="checkbox" checked>Deformation Probe (Y) [mm]</label></th></tr>
                <tr><td class="n">1</td><td>1,</td><td>-0,41655</td></tr></table></div></section>
          </div>
        </div>
      </div>
      <footer class="status"><div></div><div></div>
        <div class="msg"><svg class="ic" viewBox="0 0 16 16" aria-hidden="true"><path d="M1 5h13v8H7l-4 3v-3H1z" fill="#ffe97a" stroke="#b8962a"/><text x="6" y="11" font-size="12" fill="#111">0</text></svg><span>No Messages</span></div>
        <div>No Selection</div><div><span>Metric (mm, kg, N, s, mV, mA)</span><span>Degrees</span><span>rad/s</span><span>Cels</span></div>
        <div class="size"><svg class="ic" viewBox="0 0 16 16" aria-hidden="true"><path d="M3 16L16 3M8 16l8-8M13 16l3-3" stroke="#999" stroke-width="1.500"/></svg></div></footer>
      <svg class="ink" viewBox="0 1 1279 962" preserveAspectRatio="none" aria-hidden="true">
        <path d="M247 483C240 477 236 474 229 474C190 473 165 470 143 470C120 468 104 470 98 475C91 481 92 488 98 493C104 499 117 501 125 500C160 498 200 492 243 490"/>
        <path d="M273 449C268 460 262 464 256 472L245 487M262 470C261 478 250 482 243 489L302 491M245 488C275 478 330 470 400 460C440 456 455 449 470 445C485 440 495 441 506 438"/>
        <path d="M513 534C505 552 502 560 497 573C490 584 491 596 484 605C479 613 476 618 472 626M465 600C466 610 469 616 472 626"/>
        <path d="M456 629C435 647 420 655 395 665C360 680 330 686 295 696C265 706 245 720 225 726L193 735M211 719C208 727 203 729 193 735C205 735 208 740 219 739"/>
      </svg>`;
  }
}
